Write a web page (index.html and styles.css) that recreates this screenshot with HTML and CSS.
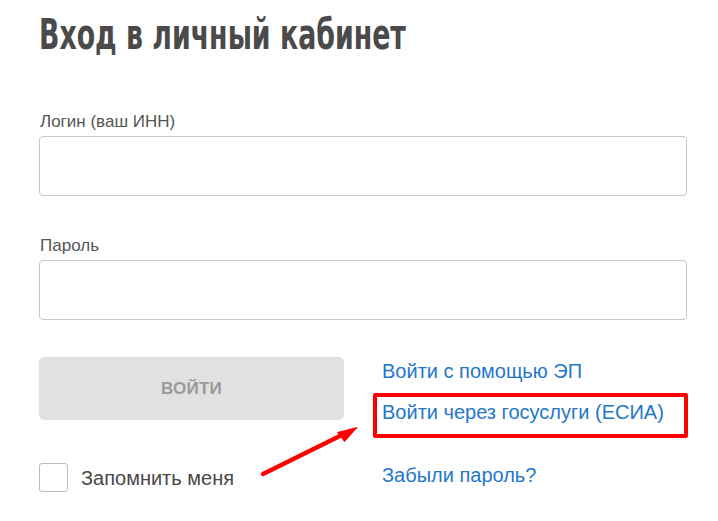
FILE: index.html
```html
<!DOCTYPE html>
<html lang="ru">
<head>
<meta charset="utf-8">
<title>Вход в личный кабинет</title>
<link rel="stylesheet" href="styles.css">
</head>
<body>
<div class="page">
  <h1 class="title"><span class="title-text">Вход в личный кабинет</span></h1>
  <div class="field">
    <label class="label">Логин (ваш ИНН)</label>
    <div class="input"></div>
  </div>
  <div class="field field-2">
    <label class="label">Пароль</label>
    <div class="input"></div>
  </div>
  <div class="bottom">
    <div class="left">
      <div class="btn">ВОЙТИ</div>
      <div class="remember">
        <span class="check"></span>
        <span class="remember-text">Запомнить меня</span>
      </div>
    </div>
    <div class="right">
      <a class="link">Войти с помощью ЭП</a>
      <div class="highlight"><a class="link-inner">Войти через госуслуги (ЕСИА)</a></div>
      <a class="link link-forgot">Забыли пароль?</a>
    </div>
  </div>
  <svg class="arrow" width="718" height="521" viewBox="0 0 718 521">
    <line x1="263" y1="474" x2="345" y2="433.5" stroke="#ff0000" stroke-width="4.2" stroke-linecap="round"/>
    <polygon points="357,427.5 337.5,432.5 344.5,441.5" fill="#ff0000" stroke="#ff0000" stroke-width="1" stroke-linejoin="round"/>
  </svg>
</div>
</body>
</html>
```
FILE: styles.css
```css
* { box-sizing: border-box; }
html, body { margin: 0; padding: 0; background: #fff; }
body { font-family: "Liberation Sans", Arial, sans-serif; }
.page {
  position: relative;
  width: 718px;
  height: 521px;
  padding: 0 31px 0 39px;
  overflow: hidden;
}
.title {
  margin: 0;
  padding-top: 10px;
  height: 112px;
  font-family: "DejaVu Sans Condensed", "DejaVu Sans", sans-serif;
  font-stretch: condensed;
  font-weight: bold;
  font-size: 42px;
  line-height: 50px;
  color: #4a4a4a;
  white-space: nowrap;
}
.title-text {
  display: inline-block;
  transform: scaleX(0.709);
  transform-origin: left center;
}
.field { display: flex; flex-direction: column; }
.field-2 { margin-top: 40px; }
.label {
  font-size: 17px;
  line-height: 20px;
  color: #555;
  margin-bottom: 4px;
  padding-left: 1px;
}
.input {
  height: 60px;
  border: 1px solid #c6c6c6;
  border-radius: 4px;
  background: #fff;
}
.bottom {
  display: grid;
  grid-template-columns: 305px 315px;
  column-gap: 29px;
  margin-top: 37px;
}
.btn {
  height: 63px;
  border-radius: 5px;
  background: #e1e1e1;
  color: #9a9a9a;
  font-weight: bold;
  font-size: 17px;
  display: flex;
  align-items: center;
  justify-content: center;
  letter-spacing: 0.2px;
}
.remember {
  display: flex;
  align-items: center;
  margin-top: 43px;
  gap: 13px;
}
.check {
  width: 29px;
  height: 29px;
  border: 1px solid #bdbdbd;
  border-radius: 3px;
  background: #fff;
}
.remember-text {
  font-size: 20px;
  line-height: 24px;
  color: #474747;
}
.right {
  display: flex;
  flex-direction: column;
  padding-top: 2px;
}
.link, .link-inner {
  font-size: 20px;
  line-height: 24px;
  color: #1f77c9;
  text-decoration: none;
}
.link { padding-left: 9px; }
.highlight {
  margin-top: 10px;
  border: 4px solid #ff0000;
  border-radius: 2px;
  padding: 3px 0 10px 5px;
}
.link-forgot { margin-top: 25px; }
.arrow {
  position: absolute;
  left: 0;
  top: 0;
  pointer-events: none;
}
```
